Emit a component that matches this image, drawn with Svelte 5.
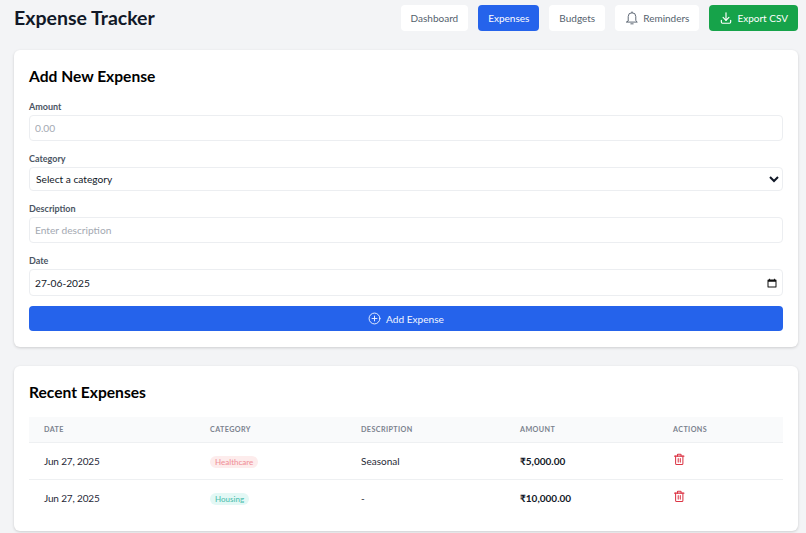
<script lang="ts">
	const navItems = [
		{ label: 'Dashboard', active: false },
		{ label: 'Expenses', active: true },
		{ label: 'Budgets', active: false }
	];

	const expenses = [
		{ date: 'Jun 27, 2025', category: 'Healthcare', tone: 'health', description: 'Seasonal', amount: '₹5,000.00' },
		{ date: 'Jun 27, 2025', category: 'Housing', tone: 'housing', description: '-', amount: '₹10,000.00' }
	];
</script>

<div class="page">
	<header class="topbar">
		<h1>Expense Tracker</h1>
		<nav class="nav">
			{#each navItems as item (item.label)}
				<button class="nav-btn" class:active={item.active}>{item.label}</button>
			{/each}
			<button class="nav-btn with-icon">
				<svg class="bell" viewBox="0 0 24 24" fill="none" stroke="currentColor" stroke-width="1.6" stroke-linecap="round" stroke-linejoin="round">
					<path d="M5.500 16.500V9.500a6.500 6.500 0 0 1 13 0v7l2.500 2.500H3z" />
					<path d="M12 3V1.500" />
					<path d="M10 22h4" />
				</svg>
				Reminders
			</button>
			<button class="export-btn">
				<svg class="download" viewBox="0 0 24 24" fill="none" stroke="currentColor" stroke-width="2" stroke-linecap="round" stroke-linejoin="round">
					<path d="M4 16v3a2 2 0 0 0 2 2h12a2 2 0 0 0 2-2v-3" />
					<path d="M7 11l5 5 5-5" />
					<path d="M12 3v13" />
				</svg>
				Export CSV
			</button>
		</nav>
	</header>

	<section class="card form-card">
		<h2>Add New Expense</h2>
		<label class="field amount">
			<span>Amount</span>
			<input type="text" placeholder="0.00" />
		</label>
		<label class="field category">
			<span>Category</span>
			<select>
				<option>Select a category</option>
			</select>
		</label>
		<label class="field description">
			<span>Description</span>
			<input type="text" placeholder="Enter description" />
		</label>
		<label class="field date">
			<span>Date</span>
			<div class="date-wrap">
				<input type="text" value="27-06-2025" />
				<svg class="calendar" viewBox="0 0 12 12" aria-hidden="true">
					<path d="M2.5 0.8h1.2v1h4.6v-1h1.2v1h0.9a1 1 0 0 1 1 1v7.6a1 1 0 0 1-1 1H1.6a1 1 0 0 1-1-1V2.800a1 1 0 0 1 1-1h0.900z M1.800 4.400v5.800h8.400V4.400z" fill="#111" fill-rule="evenodd" />
				</svg>
			</div>
		</label>
		<button class="add-btn">
			<svg viewBox="0 0 24 24" fill="none" stroke="currentColor" stroke-width="1.7" stroke-linecap="round">
				<circle cx="12" cy="12" r="10" />
				<path d="M12 7.500v9M7.500 12h9" />
			</svg>
			Add Expense
		</button>
	</section>

	<section class="card list-card">
		<h2>Recent Expenses</h2>
		<table>
			<colgroup>
				<col style="width: 166px" />
				<col style="width: 151px" />
				<col style="width: 159px" />
				<col style="width: 153px" />
				<col />
			</colgroup>
			<thead>
				<tr>
					<th>Date</th>
					<th>Category</th>
					<th>Description</th>
					<th>Amount</th>
					<th>Actions</th>
				</tr>
			</thead>
			<tbody>
				{#each expenses as row, i (i)}
					<tr>
						<td class="when">{row.date}</td>
						<td><span class="badge {row.tone}">{row.category}</span></td>
						<td>{row.description}</td>
						<td class="money">{row.amount}</td>
						<td>
							<svg class="trash" viewBox="0 0 24 24" fill="none" stroke="currentColor" stroke-width="2" stroke-linecap="round" stroke-linejoin="round">
								<path d="M3 6h18" />
								<path d="M8.500 6V3.500a1 1 0 0 1 1-1h5a1 1 0 0 1 1 1V6" />
								<path d="M5 6v14a2 2 0 0 0 2 2h10a2 2 0 0 0 2-2V6" />
								<path d="M10 10.500v7M14 10.500v7" />
							</svg>
						</td>
					</tr>
				{/each}
			</tbody>
		</table>
	</section>
</div>

<style>
	:global(body) {
		margin: 0;
		background: #f3f4f6;
		font-family: Lato, 'Noto Sans', sans-serif;
		color: #111827;
	}

	.page {
		height: 533px;
		overflow: hidden;
		box-sizing: border-box;
		padding: 5px 8px 0 14px;
	}

	.topbar {
		display: flex;
		align-items: center;
		justify-content: space-between;
		height: 25px;
		margin-bottom: 20px;
	}

	h1 {
		margin: 0;
		font-size: 19.500px;
		font-weight: 700;
		color: #111827;
	}

	.nav {
		display: flex;
		gap: 10px;
	}

	button {
		font-family: inherit;
		cursor: pointer;
		border: none;
	}

	.nav-btn,
	.export-btn {
		display: flex;
		align-items: center;
		height: 26px;
		padding: 0 10px;
		border-radius: 4px;
		font-size: 10px;
		background: #fff;
		color: #555f6d;
	}

	.nav-btn.active {
		background: #2563eb;
		color: #fff;
	}

	.export-btn {
		background: #16a34a;
		color: #fff;
	}

	.bell,
	.download {
		width: 14px;
		height: 14px;
		margin-right: 4px;
	}

	.card {
		background: #fff;
		border-radius: 6px;
		padding: 15px;
		box-shadow: 0 1px 3px rgba(0, 0, 0, 0.16);
	}

	.form-card {
		margin-bottom: 19px;
		height: 297px;
		box-sizing: border-box;
	}

	h2 {
		margin: 0;
		font-size: 15.600px;
		line-height: 22px;
		font-weight: 700;
		color: #000;
	}

	.form-card h2 {
		margin-bottom: 13px;
	}

	.field {
		display: block;
		margin-bottom: 11px;
	}

	.field.date {
		margin-bottom: 10px;
	}

	.field span {
		display: block;
		font-size: 9px;
		line-height: 13px;
		font-weight: 700;
		color: #4b5563;
		margin-bottom: 2px;
	}

	input,
	select {
		display: block;
		width: 100%;
		box-sizing: border-box;
		height: 26px;
		border: 1px solid #eceef1;
		border-radius: 4px;
		padding: 0 5px;
		font-family: inherit;
		font-size: 10.200px;
		color: #111827;
		background: #fff;
		outline: none;
	}

	input::placeholder {
		color: #a4a9b2;
	}

	.category select {
		height: 24px;
		padding-left: 2px;
	}

	.date input {
		height: 27px;
	}

	.date-wrap {
		position: relative;
	}

	.calendar {
		position: absolute;
		right: 6px;
		top: 9px;
		width: 10px;
		height: 10px;
	}

	.add-btn {
		display: flex;
		align-items: center;
		justify-content: center;
		gap: 5px;
		width: 100%;
		height: 25px;
		background: #2563eb;
		color: #f1f5ff;
		font-size: 10.100px;
		border-radius: 4px;
	}

	.add-btn svg {
		width: 13px;
		height: 13px;
	}

	.list-card {
		height: 165px;
		box-sizing: border-box;
	}

	.list-card h2 {
		margin-bottom: 14px;
	}

	table {
		width: 100%;
		border-collapse: collapse;
		table-layout: fixed;
	}

	th {
		height: 25px;
		padding: 0 0 0 15px;
		text-align: left;
		background: #f9fafb;
		border-bottom: 1px solid #eef0f2;
		font-size: 7.200px;
		font-weight: 700;
		letter-spacing: 0.4px;
		text-transform: uppercase;
		color: #7b828e;
	}

	td {
		height: 36px;
		padding: 0 0 0 15px;
		font-size: 10px;
		color: #1f2937;
		border-bottom: 1px solid #eef0f2;
	}

	tbody tr:last-child td {
		border-bottom: none;
	}

	.when {
		letter-spacing: -0.15px;
	}

	.money {
		font-weight: 700;
		color: #111827;
	}

	.badge {
		display: inline-block;
		padding: 1px 5px;
		border-radius: 8px;
		font-size: 8px;
		line-height: 10px;
		font-weight: 500;
	}

	.badge.health {
		background: #fdecec;
		color: #f0929a;
	}

	.badge.housing {
		background: #e3f8f5;
		color: #4fbfaf;
	}

	.trash {
		display: block;
		width: 12.500px;
		height: 12.500px;
		color: #dc3545;
		margin-top: -4px;
	}
</style>
